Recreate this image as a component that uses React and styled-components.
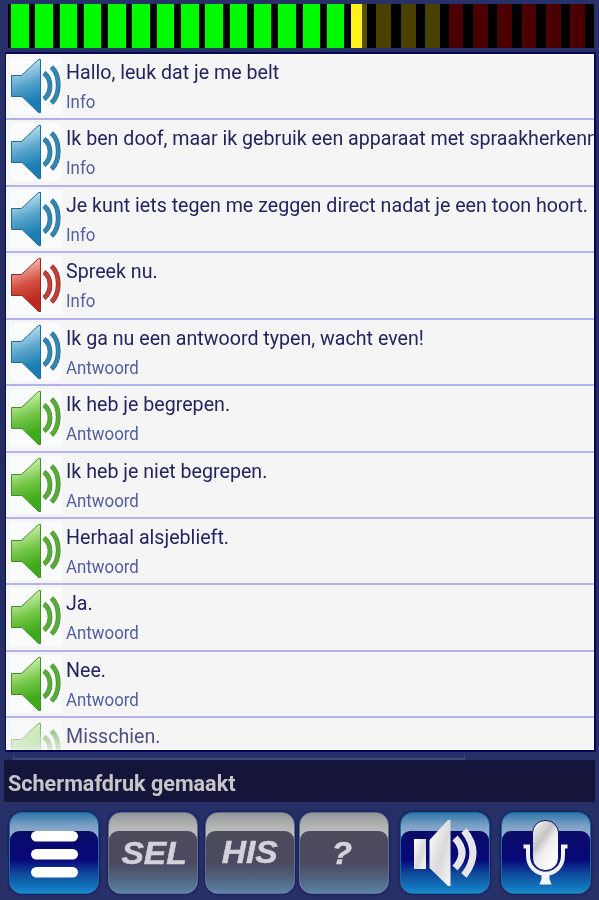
import React from "react";
import styled, { createGlobalStyle } from "styled-components";

const Global = createGlobalStyle`
  * { box-sizing: border-box; }
  body { margin: 0; background: #28306a; overflow: hidden; }
`;

const Screen = styled.main`
  width: 599px;
  height: 900px;
  padding: 4px 4px 0;
  overflow: hidden;
  background: linear-gradient(180deg, #28306a 0%, #232c62 45%, #28306a 100%);
  font-family: Roboto, "Liberation Sans", sans-serif;
`;

const Meter = styled.div`
  display: flex;
  width: 586px;
  height: 44px;
  margin-left: 4px;
  padding-left: 3px;
  background: #000;
`;

const Segment = styled.div`
  flex: 0 0 24.3px;
  &::before {
    content: "";
    display: block;
    height: 44px;
    width: ${(p) => p.$w}px;
    margin-left: ${(p) => p.$x || 0}px;
    background: ${(p) => p.$fill};
    box-shadow: 0 0 1px ${(p) => p.$edge || "transparent"};
  }
`;

const List = styled.ul`
  list-style: none;
  width: 591px;
  height: 700px;
  margin: 4px 0 0 1px;
  padding: 0;
  overflow: hidden;
  background: #f5f5f6;
  border: solid #06064e;
  border-width: 2px 2px 2px 1px;
  box-shadow: inset 0 0 0 1px #fdfdff;
`;

const Row = styled.li`
  display: flex;
  height: 66.43px;
  padding: 3px 0 0 4px;
  border-bottom: 2px solid #b4b2ec;
  white-space: nowrap;
`;

const RowIcon = styled.svg`
  flex: none;
  width: 52px;
  height: 58px;
  background: #fafbfd;
  ${(p) => p.$faded && "mask-image: linear-gradient(180deg, rgba(0, 0, 0, 0.75) 0, rgba(0, 0, 0, 0.2) 28px);"}
`;

const RowText = styled.div`
  padding: 1px 0 0 4px;
`;

const Title = styled.div`
  font-size: 21px;
  line-height: 28px;
  color: ${(p) => (p.$faded ? "#50507f" : "#24245f")};
  transform: scaleX(0.935);
  transform-origin: 0 0;
`;

const Kind = styled.div`
  margin-top: 2px;
  font-size: 18px;
  line-height: 28px;
  color: #5260a0;
  transform: scaleX(0.937);
  transform-origin: 0 0;
`;

const Rail = styled.div`
  width: 452px;
  height: 5px;
  margin: 3px 0 0 9px;
  border: solid #414779;
  border-width: 0 1px 2px;
`;

const Status = styled.div`
  width: 591px;
  height: 42px;
  padding-left: 4px;
  background: #15153c;
`;

const StatusText = styled.span`
  display: inline-block;
  font-size: 22.5px;
  font-weight: 700;
  line-height: 46px;
  color: #c6c6c8;
  transform: scaleX(0.959);
  transform-origin: 0 0;
`;

const Toolbar = styled.nav`
  display: grid;
  grid-template-columns: 99px 97px 94px 101px 101px 90px;
  width: 582px;
  margin: 10px 0 0 5px;
`;

const tones = {
  blue: {
    edge: "#176aa8",
    top: "linear-gradient(180deg, #3277aa 0%, #7ba0c4 45%, #a4b9d4 100%)",
    body: "linear-gradient(180deg, #0c0c66 0%, #07077a 46%, #0f4c9c 70%, #1588cc 100%)",
  },
  grey: {
    edge: "#62708c",
    top: "linear-gradient(180deg, #94979b 0%, #b4b6b5 50%, #c4c5c2 100%)",
    body: "linear-gradient(180deg, #4d4c5c 0%, #4b4a60 52%, #50607c 74%, #5a82a6 100%)",
  },
};

const ToolButton = styled.button`
  display: grid;
  place-items: center;
  position: relative;
  width: 90px;
  height: 82px;
  margin: 0;
  padding: 0;
  overflow: hidden;
  border: 1px solid ${(p) => tones[p.$tone].edge};
  border-radius: 13px;
  background: ${(p) => tones[p.$tone].top};
  background-size: 100% 28px;
  box-shadow: 0 0 2px 1px #18205a;

  &::before {
    content: "";
    position: absolute;
    inset: 18px 0 0;
    border-radius: 9px 9px 11px 11px;
    background: ${(p) => tones[p.$tone].body};
  }
`;

const ButtonLabel = styled.span`
  position: relative;
  top: ${(p) => p.$y || 0}px;
  left: ${(p) => p.$x || 0}px;
  font: italic 700 32px "Liberation Sans", Arial, sans-serif;
  color: #d2d2da;
  -webkit-text-stroke: 0.5px #d2d2da;
  transform: scaleX(1.05);
`;

const ButtonIcon = styled.svg`
  position: relative;
  width: 88px;
  height: 80px;
`;

const palette = {
  blue: ["#b5dcee", "#55a2ca", "#1b7db3", "#1d6c94", "#3586ae"],
  red: ["#f2b5aa", "#d45144", "#b92a20", "#94281f", "#c04036"],
  green: ["#c9efab", "#74c647", "#3faa1a", "#438c27", "#58ac38"],
};

const Speaker = ({ tone, faded }) => {
  const [light, mid, deep, edge, wave] = palette[tone];
  const id = `speaker-${tone}`;
  return (
    <RowIcon viewBox="0 0 52 58" $faded={faded}>
      <defs>
        <linearGradient id={id} x1="0" y1="0" x2="0.2" y2="1">
          <stop offset="0.18" stopColor={light} />
          <stop offset="0.55" stopColor={mid} />
          <stop offset="0.9" stopColor={deep} />
        </linearGradient>
      </defs>
      <path d="M1.500 18.500H11.500L28.500 2.500H30.500V55.500H28.500L12 39.500H1.500Z" fill={`url(#${id})`} stroke={edge} strokeWidth="1" />
      <g fill="none" stroke={edge} strokeWidth="4.800">
        <path d="M34 16C42 22 42 36 34 42" />
        <path d="M41.500 10C50.500 18.500 50.500 37.500 41.500 46" />
      </g>
      <g fill="none" stroke={wave} strokeWidth="3.600">
        <path d="M34 16C42 22 42 36 34 42" />
        <path d="M41.500 10C50.500 18.500 50.500 37.500 41.500 46" />
      </g>
    </RowIcon>
  );
};

const levels = [
  ...Array.from({ length: 14 }, () => ({ w: 17.5, fill: "#00fb00", edge: "#00a000" })),
  { w: 16, x: -0.5, fill: "linear-gradient(90deg, #fff21a 11px, #5a5000 11px)" },
  ...Array.from({ length: 3 }, () => ({ w: 15, x: 1, fill: "#484100" })),
  ...Array.from({ length: 6 }, () => ({ w: 14.5, x: 0.5, fill: "#4a0000" })),
];

const phrases = [
  { text: "Hallo, leuk dat je me belt", kind: "Info", tone: "blue" },
  { text: "Ik ben doof, maar ik gebruik een apparaat met spraakherkenn", kind: "Info", tone: "blue" },
  { text: "Je kunt iets tegen me zeggen direct nadat je een toon hoort.", kind: "Info", tone: "blue" },
  { text: "Spreek nu.", kind: "Info", tone: "red" },
  { text: "Ik ga nu een antwoord typen, wacht even!", kind: "Antwoord", tone: "blue" },
  { text: "Ik heb je begrepen.", kind: "Antwoord", tone: "green" },
  { text: "Ik heb je niet begrepen.", kind: "Antwoord", tone: "green" },
  { text: "Herhaal alsjeblieft.", kind: "Antwoord", tone: "green" },
  { text: "Ja.", kind: "Antwoord", tone: "green" },
  { text: "Nee.", kind: "Antwoord", tone: "green" },
  { text: "Misschien.", tone: "green", faded: true },
];

export default function App() {
  return (
    <>
      <Global />
      <Screen>
        <Meter>
          {levels.map((l, i) => (
            <Segment key={i} $w={l.w} $x={l.x} $fill={l.fill} $edge={l.edge} />
          ))}
        </Meter>
        <List>
          {phrases.map((p) => (
            <Row key={p.text}>
              <Speaker tone={p.tone} faded={p.faded} />
              <RowText>
                <Title $faded={p.faded}>{p.text}</Title>
                {p.kind && <Kind>{p.kind}</Kind>}
              </RowText>
            </Row>
          ))}
        </List>
        <Rail />
        <Status>
          <StatusText>Schermafdruk gemaakt</StatusText>
        </Status>
        <Toolbar>
          <ToolButton $tone="blue" aria-label="Menu">
            <ButtonIcon viewBox="0 0 88 80">
              <g fill="#fff">
                <rect x="21" y="18" width="47" height="10.500" rx="5.250" />
                <rect x="21" y="36" width="47" height="10.500" rx="5.250" />
                <rect x="21" y="54" width="47" height="10.500" rx="5.250" />
              </g>
            </ButtonIcon>
          </ToolButton>
          <ToolButton $tone="grey"><ButtonLabel $x={1}>SEL</ButtonLabel></ToolButton>
          <ToolButton $tone="grey"><ButtonLabel $y={-1}>HIS</ButtonLabel></ToolButton>
          <ToolButton $tone="grey"><ButtonLabel $x={-2}>?</ButtonLabel></ToolButton>
          <ToolButton $tone="blue" aria-label="Geluid">
            <ButtonIcon viewBox="0 0 88 80">
              <defs>
                <linearGradient id="silver" x1="0" y1="0" x2="1" y2="1">
                  <stop offset="0" stopColor="#fff" />
                  <stop offset="0.55" stopColor="#dadada" />
                  <stop offset="1" stopColor="#f8f8f8" />
                </linearGradient>
              </defs>
              <path d="M13 26H25V56H13Z" fill="url(#silver)" />
              <path d="M28.500 27L47 7H49.500V73H47L28.500 55Z" fill="url(#silver)" />
              <path d="M54 25Q68 40 54 55" fill="none" stroke="#e6e6ea" strokeWidth="7" />
              <path d="M63 17.500Q81 40 63 62.500" fill="none" stroke="#e6e6ea" strokeWidth="7" />
            </ButtonIcon>
          </ToolButton>
          <ToolButton $tone="blue" aria-label="Microfoon">
            <ButtonIcon viewBox="0 0 88 80">
              <defs>
                <linearGradient id="mic" x1="0" y1="0" x2="0.7" y2="1">
                  <stop offset="0" stopColor="#fff" />
                  <stop offset="0.42" stopColor="#c4c4c4" />
                  <stop offset="0.6" stopColor="#ededed" />
                  <stop offset="1" stopColor="#fff" />
                </linearGradient>
              </defs>
              <path d="M21.500 33.500H26V42C26 67 61 67 61 42V33.500H65.500" fill="none" stroke="#f2f2f4" strokeWidth="4" />
              <path d="M39.500 60H47.500V66L49.500 71.500H37.500L39.500 66Z" fill="#f5f5f7" />
              <rect x="30.500" y="7.500" width="26" height="50" rx="12.500" fill="url(#mic)" stroke="#101060" strokeWidth="1" />
            </ButtonIcon>
          </ToolButton>
        </Toolbar>
      </Screen>
    </>
  );
}
